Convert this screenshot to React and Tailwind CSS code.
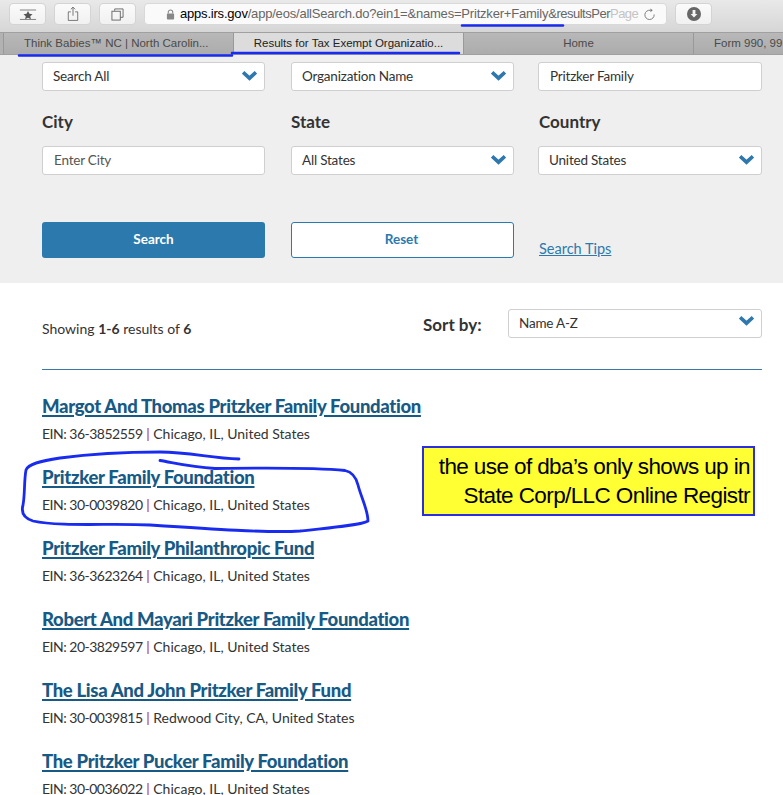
import React from 'react';

const results = [
  { name: 'Margot And Thomas Pritzker Family Foundation', ein: '36-3852559', place: 'Chicago, IL, United States' },
  { name: 'Pritzker Family Foundation', ein: '30-0039820', place: 'Chicago, IL, United States' },
  { name: 'Pritzker Family Philanthropic Fund', ein: '36-3623264', place: 'Chicago, IL, United States' },
  { name: 'Robert And Mayari Pritzker Family Foundation', ein: '20-3829597', place: 'Chicago, IL, United States' },
  { name: 'The Lisa And John Pritzker Family Fund', ein: '30-0039815', place: 'Redwood City, CA, United States' },
  { name: 'The Pritzker Pucker Family Foundation', ein: '30-0036022', place: 'Chicago, IL, United States' },
];

const tabs = [
  { label: 'Think Babies™ NC | North Carolin...', width: 'w-[230px]', align: 'justify-start pl-[20px]' },
  { label: 'Results for Tax Exempt Organizatio...', width: 'w-[230px]', align: 'justify-center', active: true },
  { label: 'Home', width: 'w-[230px]', align: 'justify-center' },
  { label: 'Form 990, 99', width: 'w-[90px]', align: 'justify-start pl-[20px]' },
];

function Chevron({ className = '' }) {
  return (
    <svg viewBox="0 0 14 10" className={`w-[15px] h-[11px] ${className}`}>
      <path d="M1 2 L7 7.500 L13 2" fill="none" stroke="#2f78ae" strokeWidth="3.4" />
    </svg>
  );
}

function ToolButton({ width = 'w-[37px]', children }) {
  return (
    <div className={`${width} h-[22px] shrink-0 flex items-center justify-center rounded-[4px] bg-gradient-to-b from-[#fbfbfb] to-[#f1f1f1] border border-[#d4d4d4]`}>
      {children}
    </div>
  );
}

function SelectBox({ label, className = '', chevron = '-mt-[3px]' }) {
  return (
    <div className={`h-[29px] flex items-center justify-between pl-[10px] pr-[7px] bg-white border border-[#cfcfcf] rounded-[3px] text-[13.5px] tracking-[-0.2px] text-[#333] ${className}`}>
      <span className="-mt-[1px]">{label}</span>
      <Chevron className={chevron} />
    </div>
  );
}

function TextBox({ label, muted }) {
  return (
    <div className={`h-[29px] flex items-center pl-[11px] bg-white border border-[#cfcfcf] rounded-[3px] text-[13.5px] tracking-[-0.2px] ${muted ? 'text-[#555]' : 'text-[#333]'}`}>
      <span className="-mt-[1px]">{label}</span>
    </div>
  );
}

function Result({ item }) {
  return (
    <div className="h-[71px]">
      <a className="block h-[28px] text-[18.5px] leading-[24px] font-black tracking-[-0.33px] text-[#175a85] underline decoration-[1.5px] underline-offset-2">{item.name}</a>
      <p className="h-[24px] text-[14px] leading-[24px] text-[#333]">
        <span className="tracking-[-0.5px]">EIN: {item.ein}</span> <span className="text-[#a33]">|</span> {item.place}
      </p>
    </div>
  );
}

export default function App() {
  return (
    <div className="relative w-[783px] h-[795px] overflow-hidden bg-white font-['Lato','Noto_Sans',sans-serif]">
      <div className="h-[32px] flex items-start gap-[8px] pt-[3px] pl-[9px] bg-gradient-to-b from-[#e9e9e9] to-[#d6d6d6] font-['Liberation_Sans',sans-serif]">
        <ToolButton>
          <svg viewBox="0 0 20 14" className="w-[18px] h-[13px]">
            <path d="M1 2h18M1 12.500h18" stroke="#777" strokeWidth="1" />
            <path d="M10 3l1.600 3.200 3.400.4-2.500 2.300.7 3.300-3.200-1.700-3.200 1.700.7-3.300L5 6.600l3.400-.4z" fill="#555" />
          </svg>
        </ToolButton>
        <ToolButton>
          <svg viewBox="0 0 14 18" className="w-[12px] h-[16px]" fill="none" stroke="#666" strokeWidth="1">
            <path d="M4.500 6.500H1.500v10h11v-10H9.500M7 11V1M4.500 3.500L7 1l2.500 2.500" />
          </svg>
        </ToolButton>
        <ToolButton>
          <svg viewBox="0 0 14 14" className="w-[13px] h-[13px]" fill="none" stroke="#666" strokeWidth="1">
            <path d="M4 3V1h9v9h-3" />
            <rect x="1" y="3.500" width="9" height="9.500" />
          </svg>
        </ToolButton>
        <div className="w-[523px] h-[22px] shrink-0 flex items-center pl-[21px] pr-[4px] rounded-[4px] bg-[#fafafa] border border-[#d9d9d9] text-[13px] whitespace-nowrap overflow-hidden">
          <svg viewBox="0 0 10 12" className="w-[9px] h-[11px] shrink-0 mr-[5px]">
            <path d="M2.500 5V3.500a2.500 2.500 0 015 0V5" fill="none" stroke="#888" strokeWidth="1.2" />
            <rect x="1" y="5" width="8" height="6.500" rx="1" fill="#888" />
          </svg>
          <span className="flex-1 text-[#666] tracking-[-0.2px]">
            <span className="text-black">apps.irs.gov</span>/app/eos/allSearch.do?ein1=&amp;names=Pritzker+Family<span className="tracking-[-0.5px]">&amp;resultsPer<span className="text-[#c4c4c4]">Page</span></span>
          </span>
          <svg viewBox="0 0 14 14" className="w-[13px] h-[13px] shrink-0 mr-[6px]" fill="none" stroke="#777" strokeWidth="1">
            <path d="M8 2.500A5 5 0 1012 7" />
            <path d="M8 0.500v4l2.500-2z" fill="#777" stroke="none" />
          </svg>
        </div>
        <ToolButton>
          <svg viewBox="0 0 14 14" className="w-[14px] h-[14px]">
            <circle cx="7" cy="7" r="7" fill="#666" />
            <path d="M5.600 3h2.800v4h2L7 10.600 3.600 7h2z" fill="#f4f4f4" />
          </svg>
        </ToolButton>
      </div>

      <div className="h-[23px] flex pl-[3px] bg-[#b2b2b2] border-y border-[#a0a0a0] font-['Liberation_Sans',sans-serif] text-[11.5px] whitespace-nowrap overflow-hidden">
        {tabs.map((tab) => (
          <div
            key={tab.label}
            className={`${tab.width} shrink-0 flex items-center border-l border-[#999] ${tab.align} ${tab.active ? 'bg-[#dcdcdc] text-[#222]' : 'bg-gradient-to-b from-[#b8b8b8] to-[#acacac] text-[#4a4a4a]'}`}
          >
            {tab.label}
          </div>
        ))}
      </div>

      <div className="h-[228px] bg-[#efefef] pt-[7px] px-[42px]">
        <div className="grid grid-cols-[249px_247px_224px]">
          <SelectBox label="Search All" className="w-[223px]" />
          <SelectBox label="Organization Name" className="w-[223px]" />
          <TextBox label="Pritzker Family" />
          <div className="h-[55px] pt-[18px] text-[17px] leading-[26px] font-bold text-[#333]">City</div>
          <div className="h-[55px] pt-[18px] text-[17px] leading-[26px] font-bold text-[#333]">State</div>
          <div className="h-[55px] pt-[18px] pl-[1px] text-[17px] leading-[26px] font-bold text-[#333]">Country</div>
          <div className="w-[223px]"><TextBox label="Enter City" muted /></div>
          <SelectBox label="All States" className="w-[223px]" />
          <SelectBox label="United States" />
        </div>
        <div className="grid grid-cols-[249px_247px_224px] mt-[47px] items-center">
          <button className="w-[223px] h-[36px] pb-[2px] bg-[#2c7aad] rounded-[3px] text-white text-[13.5px] font-bold">Search</button>
          <button className="w-[223px] h-[36px] pb-[2px] pr-[2px] bg-white border border-[#2c7aad] rounded-[3px] text-[#2c7aad] text-[13.5px] font-bold">Reset</button>
          <a className="pt-[17px] pl-[1px] text-[14.5px] leading-[18px] text-[#2c7aad] underline">Search Tips</a>
        </div>
      </div>

      <div className="px-[42px]">
        <div className="h-[87px] w-[720px] flex border-b border-[#3a78a5]">
          <p className="pt-[35px] w-[381px] text-[14px] leading-[22px] text-[#333]">
            Showing <b>1-6</b> results of <b>6</b>
          </p>
          <p className="pt-[31px] w-[85px] text-[17px] leading-[22px] font-bold text-[#333]">Sort by:</p>
          <SelectBox label="Name A-Z" className="mt-[26px] w-[254px] !items-start pt-[4px]" chevron="mt-[1px]" />
        </div>
        <div className="pt-[24px] w-[720px]">
          {results.map((item) => (
            <Result key={item.name} item={item} />
          ))}
        </div>
      </div>

      {/* yellow note pasted over the page */}
      <div className="absolute left-[422px] top-[446px] w-[333px] h-[70px] bg-[#ffff33] border-2 border-[#2b2fe0] pr-[3px] pt-[4px] text-right font-['Liberation_Sans',sans-serif] text-[22.5px] leading-[29px] text-black tracking-[-0.6px]">
        the use of dba’s only shows up in<br />State Corp/LLC Online Registr
      </div>

      {/* hand drawn blue marks */}
      <svg viewBox="0 0 783 795" className="absolute inset-0 w-[783px] h-[795px] pointer-events-none" fill="none" stroke="#1a2bf0" strokeLinecap="round" strokeLinejoin="round">
        <path d="M19 55.500H232M232 53H459" strokeWidth="2.500" />
        <path d="M462 25.500H563" strokeWidth="2.500" />
        <path d="M160 460.500C175 463 190 467 215 468.500C260 468 310 467 345 470.500C352 472 356 477 358 485C361 497 368 510 368 521C362 525 330 528 300 531C270 533 210 529 150 525C110 523 60 527 33 521C24 518 21 512 23 505C25 495 24 480 26 470C28 464 40 461 60 458C90 454 125 452 160 452C190 452 210 458 239 459" strokeWidth="2.800" />
      </svg>
    </div>
  );
}
